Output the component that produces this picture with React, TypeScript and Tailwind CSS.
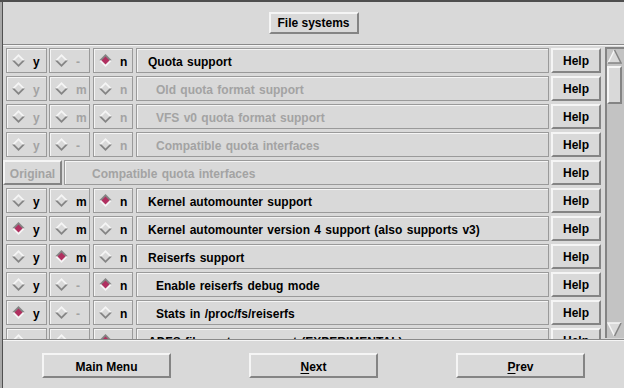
import React from 'react';

type Choice = 'y' | 'm' | 'n' | null;

type Option = {
    label: string;
    indent?: boolean;
    disabled?: boolean;
    tristate?: boolean;
    value: Choice;
};

const options: Option[] = [
    { label: 'Quota support', value: 'n' },
    { label: 'Old quota format support', indent: true, disabled: true, tristate: true, value: null },
    { label: 'VFS v0 quota format support', indent: true, disabled: true, tristate: true, value: null },
    { label: 'Compatible quota interfaces', indent: true, disabled: true, value: null },
];

const moreOptions: Option[] = [
    { label: 'Kernel automounter support', tristate: true, value: 'n' },
    { label: 'Kernel automounter version 4 support (also supports v3)', tristate: true, value: 'y' },
    { label: 'Reiserfs support', tristate: true, value: 'm' },
    { label: 'Enable reiserfs debug mode', indent: true, value: 'n' },
    { label: 'Stats in /proc/fs/reiserfs', indent: true, value: 'y' },
    { label: 'ADFS file system support (EXPERIMENTAL)', tristate: true, value: 'n' },
];

const groove = 'border border-[#9a9a9a] shadow-[inset_1px_1px_0_#f5f5f5]';
const raised = 'border-2 border-t-[#f5f5f5] border-l-[#f5f5f5] border-b-[#848484] border-r-[#848484]';

function Diamond({ on }: { on: boolean }) {
    return (
        <svg width="13" height="13" viewBox="0 0 13 13" className="shrink-0">
            <polygon points="0,6.5 6.5,0 13,6.5" fill={on ? '#848484' : '#f5f5f5'} />
            <polygon points="0,6.5 6.5,13 13,6.5" fill={on ? '#f5f5f5' : '#848484'} />
            <polygon points="2.5,6.5 6.5,2.5 10.5,6.5 6.5,10.5" fill={on ? '#b03060' : '#d9d9d9'} />
        </svg>
    );
}

function Radio({ letter, on, dim, width }: { letter: string; on: boolean; dim: boolean; width: string }) {
    return (
        <div className={`${width} h-[25px] shrink-0 flex items-center pl-[5px] gap-[8px] ${groove}`}>
            <Diamond on={on} />
            <span className={`pt-[2px] ${dim ? 'text-[#a3a3a3]' : 'text-black'}`}>{letter}</span>
        </div>
    );
}

function HelpButton() {
    return (
        <div className={`w-[50px] h-[25px] shrink-0 flex items-center justify-center ${raised}`}>
            <span className="pt-[1px]">Help</span>
        </div>
    );
}

function OptionRow({ option }: { option: Option }) {
    const { label, indent, disabled, tristate, value } = option;
    return (
        <div className="h-[25px] shrink-0 flex items-center pl-[3px]">
            <Radio letter="y" on={value === 'y'} dim={!!disabled} width="w-[41px]" />
            <div className="w-[2px]" />
            <Radio letter={tristate ? 'm' : '-'} on={value === 'm'} dim={!!disabled || !tristate} width="w-[41px]" />
            <div className="w-[3px]" />
            <Radio letter="n" on={value === 'n'} dim={!!disabled} width="w-[40px]" />
            <div className="w-[3px]" />
            <div
                className={`flex-1 h-[25px] flex items-center ${indent ? 'pl-[19px]' : 'pl-[11px]'} ${groove} ${
                    disabled ? 'text-[#a3a3a3]' : 'text-black'
                } whitespace-nowrap overflow-hidden [word-spacing:1px]`}
            >
                <span className="pt-[2px]">{label}</span>
            </div>
            <div className="w-[2px]" />
            <HelpButton />
        </div>
    );
}

function Scrollbar() {
    return (
        <div className="w-[19px] ml-[4px] mt-[1px] mb-[1px] flex flex-col bg-[#c3c3c3] border-l-2 border-t-2 border-[#848484]">
            <svg width="15" height="15" viewBox="0 0 15 15">
                <polygon points="7.5,1 14,14 1,14" fill="#d9d9d9" />
                <polyline points="1,14 7.5,1" stroke="#f5f5f5" strokeWidth="1.5" fill="none" />
                <polyline points="7.5,1 14,14 1,14" stroke="#848484" strokeWidth="1.5" fill="none" />
            </svg>
            <div className={`w-[15px] h-[38px] mt-[2px] bg-[#d9d9d9] ${raised}`} />
            <div className="flex-1" />
            <svg width="15" height="15" viewBox="0 0 15 15" className="mb-[1px]">
                <polygon points="1,1 14,1 7.5,14" fill="#d9d9d9" />
                <polyline points="7.5,14 1,1 14,1" stroke="#f5f5f5" strokeWidth="1.5" fill="none" />
                <polyline points="14,1 7.5,14" stroke="#848484" strokeWidth="1.5" fill="none" />
            </svg>
        </div>
    );
}

function NavButton({ children }: { children: React.ReactNode }) {
    return (
        <div className="flex justify-center">
            <div className={`w-[129px] h-[25px] flex items-center justify-center ${raised}`}>
                <span className="pt-[2px]">{children}</span>
            </div>
        </div>
    );
}

export default function App() {
    return (
        <div className="w-[624px] h-[388px] overflow-hidden bg-[#d9d9d9] border-t-2 border-[#4e4e4e] font-['Liberation_Sans',Arial,sans-serif] text-[12px] font-bold text-black leading-none">
            <div className="h-full border-l-2 border-[#a8a8a8]">
                <div className="h-full flex flex-col border-l border-[#505050]">
                    <div className="h-[42px] flex items-center justify-center">
                        <div className={`w-[90px] h-[22px] flex items-center justify-center ${raised}`}>
                            File systems
                        </div>
                    </div>
                    <div className="h-[2px] border-t border-[#8a8a8a] border-b border-b-[#f5f5f5]" />

                    <div className="h-[293px] flex">
                        <div className="flex-1 overflow-hidden flex flex-col gap-[3px] pt-[2px]">
                            {options.map((option, i) => (
                                <OptionRow key={i} option={option} />
                            ))}
                            <div className="h-[25px] shrink-0 flex items-center">
                                <div
                                    className={`w-[59px] h-[25px] shrink-0 flex items-center justify-center text-[#a3a3a3] ${raised}`}
                                >
                                    <span className="pt-[2px]">Original</span>
                                </div>
                                <div className="w-[2px]" />
                                <div
                                    className={`flex-1 h-[25px] flex items-center pl-[27px] text-[#a3a3a3] [word-spacing:1px] ${groove}`}
                                >
                                    <span className="pt-[2px]">Compatible quota interfaces</span>
                                </div>
                                <div className="w-[2px]" />
                                <HelpButton />
                            </div>
                            {moreOptions.map((option, i) => (
                                <OptionRow key={i} option={option} />
                            ))}
                        </div>
                        <Scrollbar />
                    </div>

                    <div className="h-[2px] border-t border-[#8a8a8a] border-b border-b-[#f5f5f5]" />
                    <div className="grid grid-cols-3 pt-[12px]">
                        <NavButton>Main Menu</NavButton>
                        <NavButton>
                            <span className="underline underline-offset-2">N</span>ext
                        </NavButton>
                        <NavButton>
                            <span className="underline underline-offset-2">P</span>rev
                        </NavButton>
                    </div>
                </div>
            </div>
        </div>
    );
}
